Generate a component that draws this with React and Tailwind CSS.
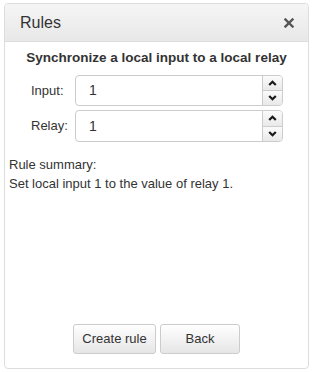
import React from "react";

function Chevron({ up }) {
  return (
    <svg width="9" height="6" viewBox="0 0 9 6">
      {up ? (
        <path d="M1.2 5 L4.5 1.7 L7.8 5" stroke="#1a1a1a" strokeWidth="2.2" fill="none" />
      ) : (
        <path d="M1.2 1 L4.5 4.3 L7.8 1" stroke="#1a1a1a" strokeWidth="2.2" fill="none" />
      )}
    </svg>
  );
}

function NumberField({ label, value, h }) {
  return (
    <div className="flex items-center pl-[26px]">
      <div className="w-[44px] text-[13px] text-[#333]">{label}</div>
      <div className={`flex w-[208px] ${h} rounded-[4px] border border-[#ccc] bg-white`}>
        <div className="flex flex-1 items-center pl-[13px] text-[14px] text-[#333]">{value}</div>
        <div className="flex w-[20px] flex-col border-l border-[#ccc]">
          <div className="flex flex-1 items-center justify-center rounded-tr-[3px] bg-gradient-to-b from-[#fbfbfb] to-[#e9e9e9] border-b border-[#ccc]">
            <Chevron up />
          </div>
          <div className="flex flex-1 items-center justify-center rounded-br-[3px] bg-gradient-to-b from-[#fbfbfb] to-[#e9e9e9]">
            <Chevron />
          </div>
        </div>
      </div>
    </div>
  );
}

export default function App() {
  return (
    <div className="h-[372px] w-[313px] bg-white pl-[4px] pt-[3px]" style={{ fontFamily: '"Liberation Sans", Arial, sans-serif' }}>
      <div className="flex h-[366px] w-[305px] flex-col rounded-[4px] border border-[#ddd] bg-white">
        <div className="flex h-[38px] items-center justify-between rounded-t-[3px] border-b border-[#ddd] bg-gradient-to-b from-[#f5f5f5] to-[#e8e8e8] pl-[15px] pr-[14px]">
          <span className="text-[16px] text-[#333]">Rules</span>
          <svg width="10" height="10" viewBox="0 0 10 10">
            <path d="M1.5 1.5 L8.5 8.5 M8.5 1.5 L1.5 8.5" stroke="#555" strokeWidth="2.4" strokeLinecap="square" />
          </svg>
        </div>
        <div className="mt-[7px] text-center text-[13.5px] font-bold leading-[17px] text-[#333]">
          Synchronize a local input to a local relay
        </div>
        <div className="mt-[9px] flex flex-col gap-[4px]">
          <NumberField label="Input:" value="1" h="h-[31px]" />
          <NumberField label="Relay:" value="1" h="h-[32px]" />
        </div>
        <div className="mt-[13px] pl-[4px] text-[13px] leading-[19px] text-[#333]">
          <div>Rule summary:</div>
          <div>Set local input 1 to the value of relay 1.</div>
        </div>
        <div className="mt-auto mb-[14px] flex justify-center gap-[4px]">
          <button className="h-[30px] w-[83px] rounded-[3px] border border-[#ccc] bg-gradient-to-b from-[#ffffff] to-[#e6e6e6] text-[13px] text-[#333]">
            Create rule
          </button>
          <button className="h-[30px] w-[80px] rounded-[3px] border border-[#ccc] bg-gradient-to-b from-[#ffffff] to-[#e6e6e6] text-[13px] text-[#333]">
            Back
          </button>
        </div>
      </div>
    </div>
  );
}
